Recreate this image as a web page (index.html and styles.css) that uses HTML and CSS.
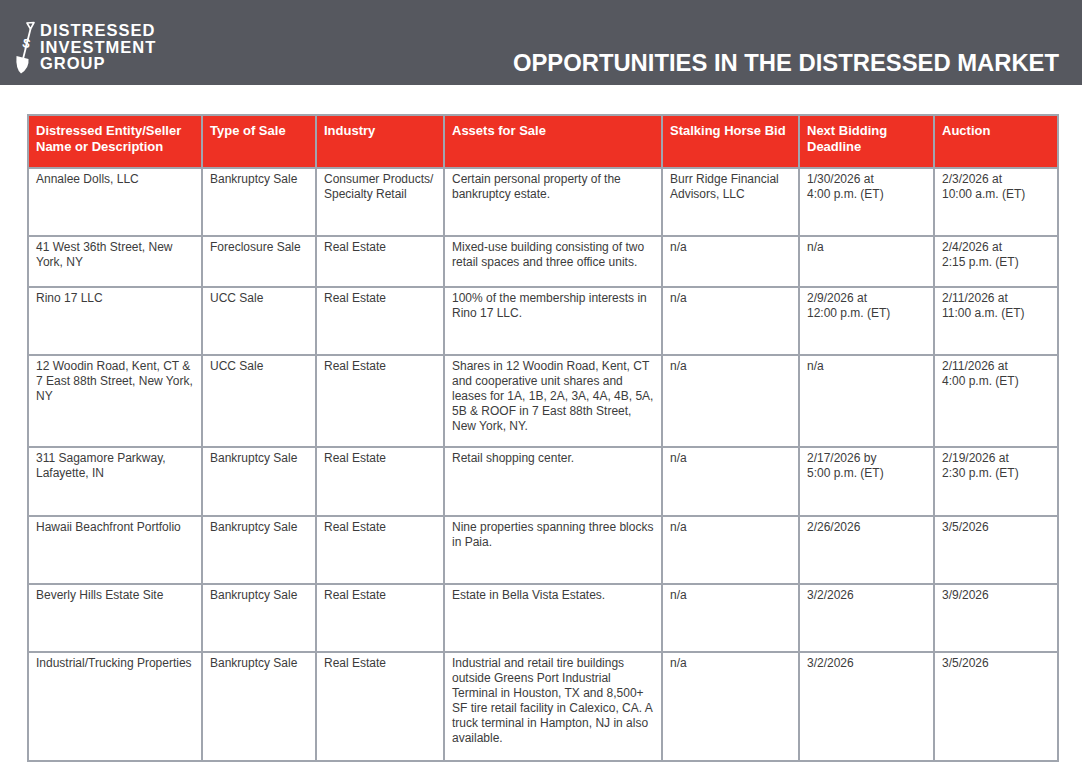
FILE: index.html
```html
<!DOCTYPE html>
<html>
<head>
<meta charset="utf-8">
<link rel="stylesheet" href="styles.css">
</head>
<body>
<header class="top">
  <div class="logo">
    <svg class="shovel" width="22" height="56" viewBox="0 0 22 56">
      <path d="M13 4 L20 3.5 L16.5 10 Z" fill="none" stroke="#fff" stroke-width="1.6" stroke-linejoin="round"/>
      <line x1="16.5" y1="10" x2="9" y2="40" stroke="#fff" stroke-width="1.8"/>
      <text x="9" y="29" class="dollar" transform="rotate(14 13 23)">$</text>
      <path d="M2.5 37 L14.5 40 Q15.5 49 7 54.5 Q1.5 50 2.5 37 Z" fill="#fff"/>
    </svg>
    <div class="logo-text">DISTRESSED<br>INVESTMENT<br>GROUP</div>
  </div>
  <h1 class="title">OPPORTUNITIES IN THE DISTRESSED MARKET</h1>
</header>

<table class="deals">
  <colgroup>
    <col class="c1"><col class="c2"><col class="c3"><col class="c4"><col class="c5"><col class="c6"><col class="c7">
  </colgroup>
  <thead>
    <tr class="hrow">
      <th>Distressed Entity/Seller<br>Name or Description</th>
      <th>Type of Sale</th>
      <th>Industry</th>
      <th>Assets for Sale</th>
      <th>Stalking Horse Bid</th>
      <th>Next Bidding<br>Deadline</th>
      <th>Auction</th>
    </tr>
  </thead>
  <tbody>
    <tr class="r68">
      <td>Annalee Dolls, LLC</td>
      <td>Bankruptcy Sale</td>
      <td>Consumer Products/<br>Specialty Retail</td>
      <td>Certain personal property of the<br>bankruptcy estate.</td>
      <td>Burr Ridge Financial<br>Advisors, LLC</td>
      <td>1/30/2026 at<br>4:00 p.m. (ET)</td>
      <td>2/3/2026 at<br>10:00 a.m. (ET)</td>
    </tr>
    <tr class="r51">
      <td>41 West 36th Street, New<br>York, NY</td>
      <td>Foreclosure Sale</td>
      <td>Real Estate</td>
      <td>Mixed-use building consisting of two<br>retail spaces and three office units.</td>
      <td>n/a</td>
      <td>n/a</td>
      <td>2/4/2026 at<br>2:15 p.m. (ET)</td>
    </tr>
    <tr class="r68">
      <td>Rino 17 LLC</td>
      <td>UCC Sale</td>
      <td>Real Estate</td>
      <td>100% of the membership interests in<br>Rino 17 LLC.</td>
      <td>n/a</td>
      <td>2/9/2026 at<br>12:00 p.m. (ET)</td>
      <td>2/11/2026 at<br>11:00 a.m. (ET)</td>
    </tr>
    <tr class="r92">
      <td>12 Woodin Road, Kent, CT &amp;<br>7 East 88th Street, New York,<br>NY</td>
      <td>UCC Sale</td>
      <td>Real Estate</td>
      <td>Shares in 12 Woodin Road, Kent, CT<br>and cooperative unit shares and<br>leases for 1A, 1B, 2A, 3A, 4A, 4B, 5A,<br>5B &amp; ROOF in 7 East 88th Street,<br>New York, NY.</td>
      <td>n/a</td>
      <td>n/a</td>
      <td>2/11/2026 at<br>4:00 p.m. (ET)</td>
    </tr>
    <tr class="r69">
      <td>311 Sagamore Parkway,<br>Lafayette, IN</td>
      <td>Bankruptcy Sale</td>
      <td>Real Estate</td>
      <td>Retail shopping center.</td>
      <td>n/a</td>
      <td>2/17/2026 by<br>5:00 p.m. (ET)</td>
      <td>2/19/2026 at<br>2:30 p.m. (ET)</td>
    </tr>
    <tr class="r68">
      <td>Hawaii Beachfront Portfolio</td>
      <td>Bankruptcy Sale</td>
      <td>Real Estate</td>
      <td>Nine properties spanning three blocks<br>in Paia.</td>
      <td>n/a</td>
      <td>2/26/2026</td>
      <td>3/5/2026</td>
    </tr>
    <tr class="r68">
      <td>Beverly Hills Estate Site</td>
      <td>Bankruptcy Sale</td>
      <td>Real Estate</td>
      <td>Estate in Bella Vista Estates.</td>
      <td>n/a</td>
      <td>3/2/2026</td>
      <td>3/9/2026</td>
    </tr>
    <tr class="r109">
      <td>Industrial/Trucking Properties</td>
      <td>Bankruptcy Sale</td>
      <td>Real Estate</td>
      <td>Industrial and retail tire buildings<br>outside Greens Port Industrial<br>Terminal in Houston, TX and 8,500+<br>SF tire retail facility in Calexico, CA. A<br>truck terminal in Hampton, NJ in also<br>available.</td>
      <td>n/a</td>
      <td>3/2/2026</td>
      <td>3/5/2026</td>
    </tr>
  </tbody>
</table>
</body>
</html>
```

FILE: styles.css
```css
html, body {
  margin: 0;
  padding: 0;
  background: #ffffff;
}

body {
  font-family: "Liberation Sans", Arial, sans-serif;
  color: #3c3c3c;
}

.top {
  height: 85px;
  background: #56585f;
  display: flex;
  justify-content: space-between;
  align-items: flex-start;
  padding: 0 23px 0 14px;
  box-sizing: border-box;
}

.logo {
  display: flex;
  align-items: flex-start;
  padding-top: 18px;
  gap: 4px;
}

.shovel {
  display: block;
  margin-top: 1px;
}

.dollar {
  font-family: "Liberation Sans", Arial, sans-serif;
  font-weight: bold;
  font-size: 13px;
  fill: #ffffff;
}

.logo-text {
  color: #ffffff;
  font-family: "Liberation Sans", Arial, sans-serif;
  font-weight: bold;
  font-size: 16.5px;
  line-height: 16.7px;
  letter-spacing: 1px;
  padding-top: 4px;
}

.title {
  margin: 0;
  align-self: flex-end;
  padding-bottom: 10px;
  color: #ffffff;
  font-size: 23.8px;
  line-height: 24px;
  font-weight: bold;
}

.deals {
  margin: 29px 0 0 27px;
  width: 1031px;
  table-layout: fixed;
  border-collapse: collapse;
  border: 2px solid #a0a5ae;
}

.c1 { width: 174px; }
.c2 { width: 114px; }
.c3 { width: 128px; }
.c4 { width: 218px; }
.c5 { width: 137px; }
.c6 { width: 135px; }
.c7 { width: 124px; }

.deals th,
.deals td {
  border: 2px solid #a0a5ae;
  vertical-align: top;
  text-align: left;
  white-space: nowrap;
}

.deals th {
  background: #ee3124;
  color: #ffffff;
  font-size: 13px;
  line-height: 16px;
  font-weight: bold;
  padding: 7px 7px 0 7px;
}

.deals td {
  font-size: 12px;
  line-height: 15px;
  padding: 3px 7px 0 7px;
}

.hrow { height: 53px; }
.r51 { height: 51px; }
.r68 { height: 68px; }
.r69 { height: 69px; }
.r92 { height: 92px; }
.r109 { height: 109px; }
```
